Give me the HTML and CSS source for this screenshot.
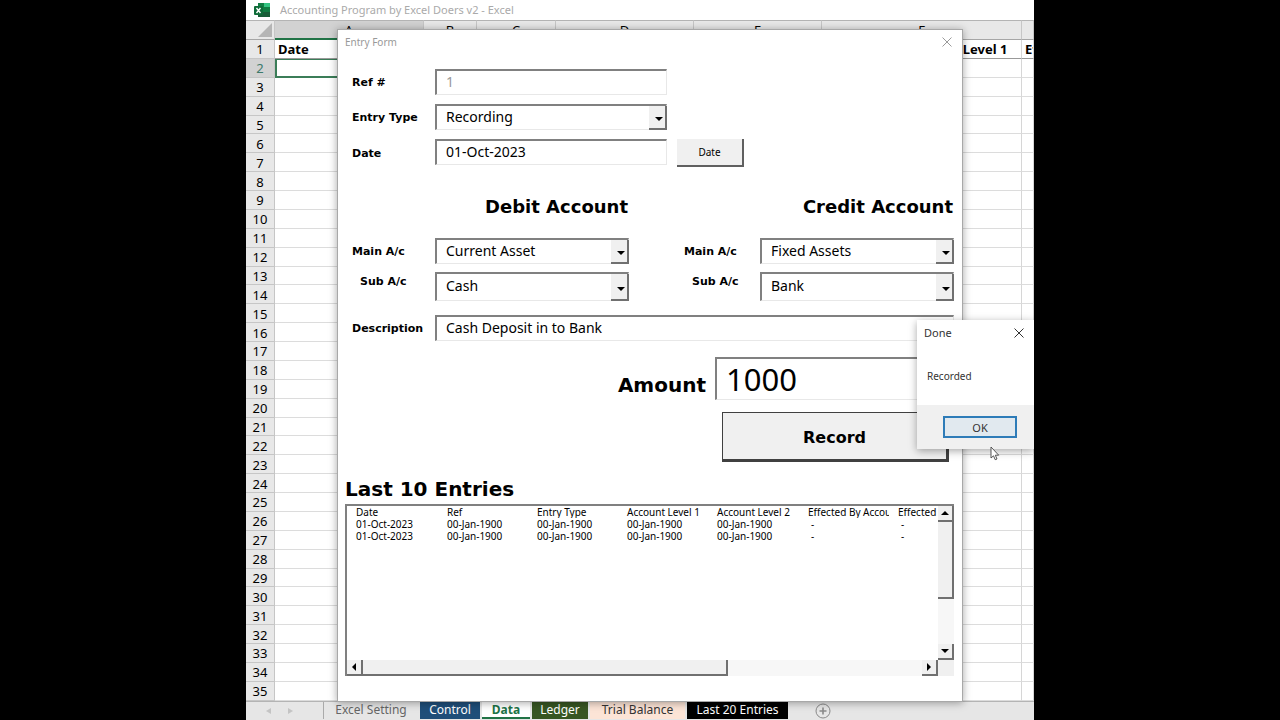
FILE: index.html
```html
<!DOCTYPE html>
<html lang="en">
<head>
    <meta charset="UTF-8">
    <meta name="viewport" content="width=device-width, initial-scale=1.0">
    <title>Accounting Program by Excel Doers v2 - Excel</title>
    <link rel="stylesheet" href="styles.css">
</head>
<body>
    <div class="app">
        <header class="app-title">
            <svg class="excel-icon" width="16" height="14" viewBox="0 0 16 14">
                <rect x="4" y="0" width="12" height="14" rx="1" fill="#21a366"/>
                <rect x="4" y="0" width="6" height="4" fill="#107c41"/>
                <rect x="10" y="0" width="6" height="4" fill="#33c481"/>
                <rect x="4" y="4" width="12" height="6" fill="#107c41"/>
                <rect x="4" y="9" width="12" height="5" fill="#185c37"/>
                <rect x="0" y="3" width="9" height="9" rx="1" fill="#0e6b38"/>
                <path d="M2.5 5 L6.5 10 M6.5 5 L2.5 10" stroke="#fff" stroke-width="1.4"/>
            </svg>
            <span>Accounting Program by Excel Doers v2 - Excel</span>
        </header>

        <div class="sheet">
            <table class="cells">
                <colgroup>
                    <col class="col-head"><col class="col-a"><col class="col-b"><col class="col-c">
                    <col class="col-d"><col class="col-e"><col class="col-f"><col>
                </colgroup>
                <thead>
                    <tr>
                        <th class="corner"><svg width="14" height="14" viewBox="0 0 14 14"><path d="M14 0 V14 H0 Z" fill="#b5b5b5"/></svg></th>
                        <th class="active">A</th><th>B</th><th>C</th><th>D</th><th>E</th><th>F</th><th></th>
                    </tr>
                </thead>
                <tbody id="rows"></tbody>
            </table>
        </div>

        <nav class="tabs">
            <span class="tab-arrows">
                <svg width="5" height="6" viewBox="0 0 5 6"><path d="M5 0 V6 L0 3 Z" fill="#c4c4c4"/></svg>
                <svg width="5" height="6" viewBox="0 0 5 6"><path d="M0 0 V6 L5 3 Z" fill="#c4c4c4"/></svg>
            </span>
            <button class="tab tab-setting">Excel Setting</button>
            <button class="tab tab-control">Control</button>
            <button class="tab tab-data">Data</button>
            <button class="tab tab-ledger">Ledger</button>
            <button class="tab tab-trial">Trial Balance</button>
            <button class="tab tab-last">Last 20 Entries</button>
            <button class="tab-add" aria-label="New sheet">
                <svg width="16" height="16" viewBox="0 0 16 16" fill="none" stroke="#8a8a8a">
                    <circle cx="8" cy="8" r="7"/>
                    <path d="M8 4.500 V11.500 M4.500 8 H11.500" stroke-width="1.6"/>
                </svg>
            </button>
        </nav>

        <!-- Entry form window -->
        <section class="entry-window">
            <div class="window-title">
                <span>Entry Form</span>
                <button class="close" aria-label="Close form">
                    <svg width="10" height="10" viewBox="0 0 10 10"><path d="M0.500 0.500 L9.500 9.500 M9.500 0.500 L0.500 9.500" stroke="#9a9a9a"/></svg>
                </button>
            </div>
            <form class="entry-form">
                <div class="fields">
                    <label for="ref">Ref #</label>
                    <input type="text" id="ref" value="1" disabled>
                    <span></span>
                    <label for="entry-type">Entry Type</label>
                    <span class="combo">
                        <select id="entry-type"><option>Recording</option></select>
                    </span>
                    <span></span>
                    <label for="entry-date">Date</label>
                    <input type="text" id="entry-date" value="01-Oct-2023">
                    <button type="button" class="date-btn">Date</button>
                </div>

                <div class="accounts">
                    <h2>Debit Account</h2>
                    <h2>Credit Account</h2>

                    <label for="debit-main">Main A/c</label>
                    <span class="combo"><select id="debit-main"><option>Current Asset</option></select></span>
                    <label for="credit-main" class="credit">Main A/c</label>
                    <span class="combo"><select id="credit-main"><option>Fixed Assets</option></select></span>

                    <label for="debit-sub" class="sub">Sub A/c</label>
                    <span class="combo"><select id="debit-sub"><option>Cash</option></select></span>
                    <label for="credit-sub" class="sub credit">Sub A/c</label>
                    <span class="combo"><select id="credit-sub"><option>Bank</option></select></span>
                </div>

                <div class="description">
                    <label for="description">Description</label>
                    <input type="text" id="description" value="Cash Deposit in to Bank">
                </div>

                <div class="amount">
                    <label for="amount">Amount</label>
                    <input type="text" id="amount" value="1000">
                </div>

                <button type="button" class="record-btn">Record</button>
            </form>

            <h2 class="list-title">Last 10 Entries</h2>
            <div class="list">
                <div class="list-view">
                    <table class="entries">
                        <colgroup><col class="wide"><col><col><col><col class="wide"><col><col></colgroup>
                        <thead>
                            <tr>
                                <th>Date</th><th>Ref</th><th>Entry Type</th><th>Account Level 1</th>
                                <th>Account Level 2</th><th>Effected By Account Level 1</th><th>Effected By</th>
                            </tr>
                        </thead>
                        <tbody>
                            <tr>
                                <td>01-Oct-2023</td><td>00-Jan-1900</td><td>00-Jan-1900</td><td>00-Jan-1900</td>
                                <td>00-Jan-1900</td><td class="dash">-</td><td class="dash">-</td>
                            </tr>
                            <tr>
                                <td>01-Oct-2023</td><td>00-Jan-1900</td><td>00-Jan-1900</td><td>00-Jan-1900</td>
                                <td>00-Jan-1900</td><td class="dash">-</td><td class="dash">-</td>
                            </tr>
                        </tbody>
                    </table>
                </div>
                <div class="scroll-v">
                    <button class="raised" aria-label="Scroll up"><svg width="8" height="4" viewBox="0 0 8 4"><path d="M0 4 H8 L4 0 Z"/></svg></button>
                    <div class="thumb raised"></div>
                    <div class="track"></div>
                    <button class="raised" aria-label="Scroll down"><svg width="8" height="4" viewBox="0 0 8 4"><path d="M0 0 H8 L4 4 Z"/></svg></button>
                </div>
                <div class="scroll-h">
                    <button class="raised" aria-label="Scroll left"><svg width="4" height="8" viewBox="0 0 4 8"><path d="M4 0 V8 L0 4 Z"/></svg></button>
                    <div class="thumb raised"></div>
                    <div class="track"></div>
                    <button class="raised" aria-label="Scroll right"><svg width="4" height="8" viewBox="0 0 4 8"><path d="M0 0 V8 L4 4 Z"/></svg></button>
                </div>
                <div class="scroll-corner"></div>
            </div>
        </section>

        <!-- Message box -->
        <section class="msgbox">
            <div class="msg-title">
                <span>Done</span>
                <button class="close" aria-label="Close message">
                    <svg width="10" height="10" viewBox="0 0 10 10"><path d="M0.500 0.500 L9.500 9.500 M9.500 0.500 L0.500 9.500" stroke="#333"/></svg>
                </button>
            </div>
            <p class="msg-text">Recorded</p>
            <div class="msg-footer">
                <button class="ok-btn">OK</button>
            </div>
        </section>
        <svg class="cursor" width="10" height="15" viewBox="0 0 10 15">
            <path d="M1 1 V12 L3.500 9.800 L5.200 13.700 L7 13 L5.300 9.200 H8.700 Z" fill="#fff" stroke="#444" stroke-width="0.9"/>
        </svg>
    </div>

    <script>
        const rows = document.getElementById('rows');
        const headings = { 0: 'Date', 5: 'Effected By Account Level 1', 6: 'Effected By Account Level 2' };

        for (let r = 1; r <= 35; r++) {
            const tr = document.createElement('tr');
            const th = document.createElement('th');
            th.textContent = r;
            tr.appendChild(th);
            for (let c = 0; c < 7; c++) {
                const td = document.createElement('td');
                if (r === 1 && headings[c]) td.textContent = headings[c];
                tr.appendChild(td);
            }
            if (r === 1) tr.className = 'heading-row';
            if (r === 2) tr.className = 'active-row';
            rows.appendChild(tr);
        }
    </script>
</body>
</html>
```
FILE: styles.css
```css
* {
    box-sizing: border-box;
}
body {
    margin: 0;
    background-color: #000;
    font-family: 'Noto Sans', sans-serif;
    color: #000;
}
button {
    font-family: inherit;
    padding: 0;
    border: none;
    background: none;
    color: inherit;
}
svg {
    display: block;
}
.app {
    position: relative;
    display: flex;
    flex-direction: column;
    height: 100vh;
    margin: 0 246px;
    background-color: #fff;
    overflow: hidden;
}
.app-title {
    display: flex;
    align-items: center;
    gap: 10px;
    height: 20px;
    flex: none;
    padding-left: 8px;
    font-size: 11px;
    line-height: 20px;
    color: #aaa;
}

/* worksheet */
.sheet {
    flex: 1;
    min-height: 0;
    overflow: hidden;
}
.cells {
    width: 100%;
    height: 100%;
    table-layout: fixed;
    border-collapse: separate;
    border-spacing: 0;
    font-size: 13px;
    line-height: 16px;
}
.col-head { width: 29px; }
.col-a { width: 149px; }
.col-b { width: 53px; }
.col-c { width: 79px; }
.col-d { width: 138px; }
.col-e { width: 128px; }
.col-f { width: 200px; }
.cells th,
.cells td {
    padding: 1px 0 0;
    border-right: 1px solid #d6d6d6;
    border-bottom: 1px solid #dcdcdc;
    white-space: nowrap;
    overflow: hidden;
}
.cells th {
    background-color: #e8e8e8;
    border-color: #c6c6c6;
    font-weight: 400;
}
.cells thead th {
    height: 20px;
    padding: 0;
    border-top: 1px solid #b4b4b4;
    border-bottom-color: #a6a6a6;
}
.cells thead .active {
    background-color: #d2d2d2;
    border-bottom: 2px solid #217346;
}
.cells .corner svg {
    margin-left: 12px;
}
.cells .heading-row td {
    padding-left: 3px;
    border-bottom-color: #999;
    font-weight: 700;
}
.cells .heading-row td:nth-child(7) {
    padding-left: 8px;
}
.cells .active-row th {
    background-color: #d2d2d2;
    color: #3d7a6b;
}
.cells .active-row td:nth-child(2) {
    border: 2px solid #3b7d58;
    border-top-width: 1px;
}

/* sheet tabs */
.tabs {
    display: flex;
    gap: 2px;
    height: 19px;
    flex: none;
    padding-bottom: 1px;
    background-color: #e6e6e6;
    border-top: 1px solid #b4b4b4;
}
.tab-arrows {
    display: flex;
    align-items: center;
    gap: 17px;
    width: 75px;
    padding-left: 20px;
}
.tab {
    padding: 0 7px 3px;
    font-size: 12px;
    line-height: 15px;
    color: #fff;
}
.tab-setting {
    width: 95px;
    color: #666;
    border-left: 1px solid #aaa;
}
.tab-control {
    width: 60px;
    background-color: #1f4e79;
}
.tab-data {
    width: 48px;
    padding-bottom: 1px;
    background-color: #fff;
    color: #217346;
    font-weight: 700;
    border-bottom: 2px solid #217346;
}
.tab-ledger {
    width: 56px;
    background-color: #375623;
}
.tab-trial {
    width: 95px;
    background-color: #fce4d6;
    color: #333;
}
.tab-last {
    width: 101px;
    background-color: #000;
}
.tab-add {
    margin-left: 25px;
    align-self: end;
}

/* entry form */
.entry-window {
    position: absolute;
    top: 29px;
    right: 71px;
    bottom: 18px;
    left: 91px;
    display: flex;
    flex-direction: column;
    padding: 0 8px 25px 7px;
    background-color: #fff;
    border: 1px solid #a8a8a8;
    box-shadow: 0 1px 8px rgba(0, 0, 0, 0.35);
}
.window-title {
    display: flex;
    align-items: center;
    justify-content: space-between;
    height: 24px;
    padding-right: 2px;
    font-size: 10px;
    color: #999;
}
.entry-form {
    display: flex;
    flex-direction: column;
    padding: 15px 0 0 7px;
}
.entry-form label {
    padding-top: 2px;
    font-family: 'DejaVu Sans', sans-serif;
    font-size: 11px;
    line-height: 16px;
    font-weight: 700;
}
.entry-form input,
.entry-form select {
    width: 100%;
    height: 100%;
    min-height: 26px;
    padding: 0 10px 3px 9px;
    border: 1px solid #e8e8e8;
    border-top: 2px solid #808080;
    border-left: 2px solid #808080;
    border-radius: 0;
    background-color: #fff;
    font-family: inherit;
    font-size: 14px;
    color: #000;
    appearance: none;
}
.entry-form input:disabled {
    color: #999;
}
.combo {
    position: relative;
}
.combo::before {
    content: '';
    position: absolute;
    top: 2px;
    right: 0;
    bottom: 0;
    width: 16px;
    background-color: #f0f0f0;
    border-right: 2px solid #707070;
    border-bottom: 2px solid #707070;
    pointer-events: none;
}
.combo::after {
    content: '';
    position: absolute;
    top: 50%;
    right: 4px;
    border: 4px solid transparent;
    border-top-color: #000;
    border-bottom: none;
    pointer-events: none;
}
.fields {
    display: grid;
    grid-template-columns: 83px 232px 67px;
    grid-template-rows: 26px 26px 28px;
    row-gap: 9px;
    align-items: center;
}
.fields > .combo,
.fields > input {
    height: 26px;
    align-self: start;
}
.date-btn {
    height: 28px;
    margin-left: 10px;
    width: 67px;
    background-color: #f0f0f0;
    border-right: 2px solid #606060;
    border-bottom: 2px solid #606060;
    font-size: 10px;
}
.accounts {
    display: grid;
    grid-template-columns: 83px 1fr 131px 1fr;
    grid-template-rows: 35px 26px 29px;
    row-gap: 8px;
    align-items: center;
    margin-top: 28px;
}
.accounts h2 {
    align-self: start;
    grid-column: span 2;
    margin: 0;
    padding-right: 1px;
    font-family: 'DejaVu Sans', sans-serif;
    font-size: 18px;
    line-height: 24px;
    text-align: right;
}
.accounts .combo {
    height: 100%;
}
.accounts .credit {
    padding-left: 55px;
}
.accounts .sub {
    align-self: start;
    padding-left: 8px;
}
.accounts .sub.credit {
    padding-left: 63px;
}
.description {
    display: grid;
    grid-template-columns: 83px 1fr;
    align-items: center;
    margin-top: 14px;
}
.amount {
    display: flex;
    align-items: center;
    justify-content: flex-end;
    gap: 9px;
    height: 43px;
    margin: 16px 6px 0 0;
}
.entry-form .amount label {
    padding-top: 12px;
    font-size: 20px;
    line-height: 24px;
}
.entry-form .amount input {
    width: 233px;
    padding-bottom: 0;
    font-size: 31px;
}
.record-btn {
    align-self: flex-end;
    width: 227px;
    height: 50px;
    margin: 12px 5px 0 0;
    padding-top: 2px;
    background-color: #f0f0f0;
    border: 1px solid #404040;
    border-right: 3px solid #404040;
    border-bottom: 3px solid #404040;
    font-family: 'DejaVu Sans', sans-serif;
    font-size: 16px;
    font-weight: 700;
}

/* last entries list */
.list-title {
    margin: 15px 0 3px;
    font-family: 'DejaVu Sans', sans-serif;
    font-size: 20px;
    line-height: 24px;
}
.list {
    flex: 1;
    display: grid;
    grid-template-columns: 1fr 16px;
    grid-template-rows: 1fr 16px;
    min-height: 0;
    border-top: 2px solid #808080;
    border-left: 2px solid #808080;
}
.list-view {
    overflow: hidden;
}
.entries {
    width: 632px;
    table-layout: fixed;
    border-collapse: collapse;
    font-size: 10px;
    line-height: 12px;
}
.entries col {
    width: 90px;
}
.entries .wide {
    width: 91px;
}
.entries th,
.entries td {
    padding: 0 1px 0 9px;
    font-weight: 400;
    text-align: left;
    white-space: nowrap;
    overflow: hidden;
}
.entries .dash {
    padding-left: 12px;
}
.raised {
    background-color: #f0f0f0;
    border-right: 2px solid #707070;
    border-bottom: 2px solid #707070;
}
.scroll-v,
.scroll-h {
    display: flex;
    background-color: #f7f7f7;
}
.scroll-v {
    flex-direction: column;
}
.scroll-v button,
.scroll-h button {
    display: flex;
    align-items: center;
    justify-content: center;
    flex: none;
    width: 16px;
    height: 16px;
}
.scroll-v .thumb {
    flex: 5;
}
.scroll-v .track {
    flex: 3;
}
.scroll-h .thumb {
    flex: 15;
}
.scroll-h .track {
    flex: 8;
}
.scroll-corner {
    background-color: #f0f0f0;
}

/* message box */
.msgbox {
    position: absolute;
    top: 320px;
    right: 0;
    width: 117px;
    background-color: #fff;
    box-shadow: 0 2px 8px rgba(0, 0, 0, 0.35);
    font-size: 10px;
    line-height: 14px;
    color: #333;
}
.msg-title {
    display: flex;
    align-items: center;
    justify-content: space-between;
    height: 26px;
    padding: 0 10px 0 7px;
    font-size: 11px;
}
.msg-text {
    margin: 23px 0 22px;
    padding-left: 10px;
}
.msg-footer {
    display: flex;
    height: 44px;
    padding: 11px 17px 11px 26px;
    background-color: #f0f0f0;
}
.ok-btn {
    flex: 1;
    background-color: #e1e9ef;
    border: 2px solid #2e7cb8;
    font-size: 11px;
}
.cursor {
    position: absolute;
    top: 446px;
    right: 34px;
}
```
